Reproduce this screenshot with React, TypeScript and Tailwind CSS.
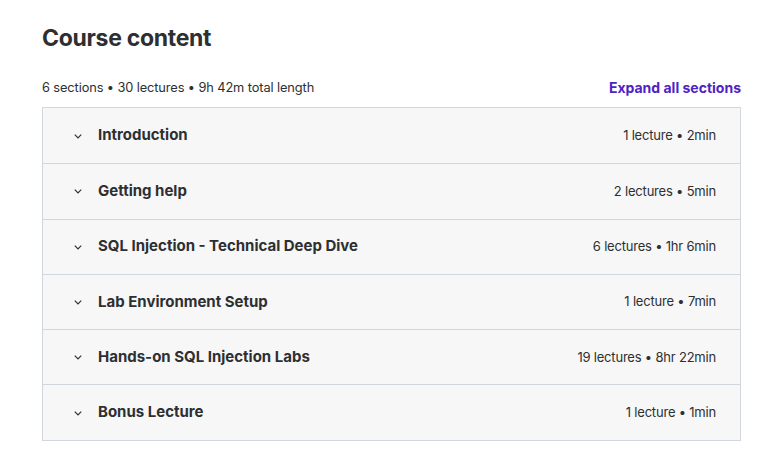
import React from "react";

const sections = [
  { title: "Introduction", meta: "1 lecture • 2min" },
  { title: "Getting help", meta: "2 lectures • 5min" },
  { title: "SQL Injection - Technical Deep Dive", meta: "6 lectures • 1hr 6min" },
  { title: "Lab Environment Setup", meta: "1 lecture • 7min" },
  { title: "Hands-on SQL Injection Labs", meta: "19 lectures • 8hr 22min" },
  { title: "Bonus Lecture", meta: "1 lecture • 1min" },
];

const Chevron = () => (
  <svg width="10" height="10" viewBox="0 0 10 10" fill="none" className="text-[#2d2f31]">
    <path d="M1.8 3.6 5 6.8l3.2-3.2" stroke="currentColor" strokeWidth="1.2" />
  </svg>
);

export default function App() {
  return (
    <div className="min-h-[460px] bg-white pl-[42px] pr-[31px] pt-[24px] text-[#2d2f31] font-['Inter','Liberation_Sans',sans-serif]">
      <h2 className="text-[23px] font-bold leading-[28px] tracking-[-0.3px]">Course content</h2>
      <div className="mt-[25px] flex items-center justify-between">
        <span className="text-[12.8px] tracking-[-0.1px] text-[#2d2f31]">6 sections • 30 lectures • 9h 42m total length</span>
        <button className="text-[14px] font-bold text-[#5022c3]">Expand all sections</button>
      </div>
      <div className="mt-[9px] border border-[#d1d7dc]">
        {sections.map((s, i) => (
          <div
            key={s.title}
            className={`flex h-[55.3px] items-center bg-[#f7f7f8] pl-[30px] pr-[24px] ${i > 0 ? "border-t border-[#d1d7dc]" : ""}`}
          >
            <Chevron />
            <span className="ml-[15px] flex-1 text-[15px] font-bold">{s.title}</span>
            <span className="text-[13px] tracking-[-0.2px] text-[#2d2f31]">{s.meta}</span>
          </div>
        ))}
      </div>
    </div>
  );
}
